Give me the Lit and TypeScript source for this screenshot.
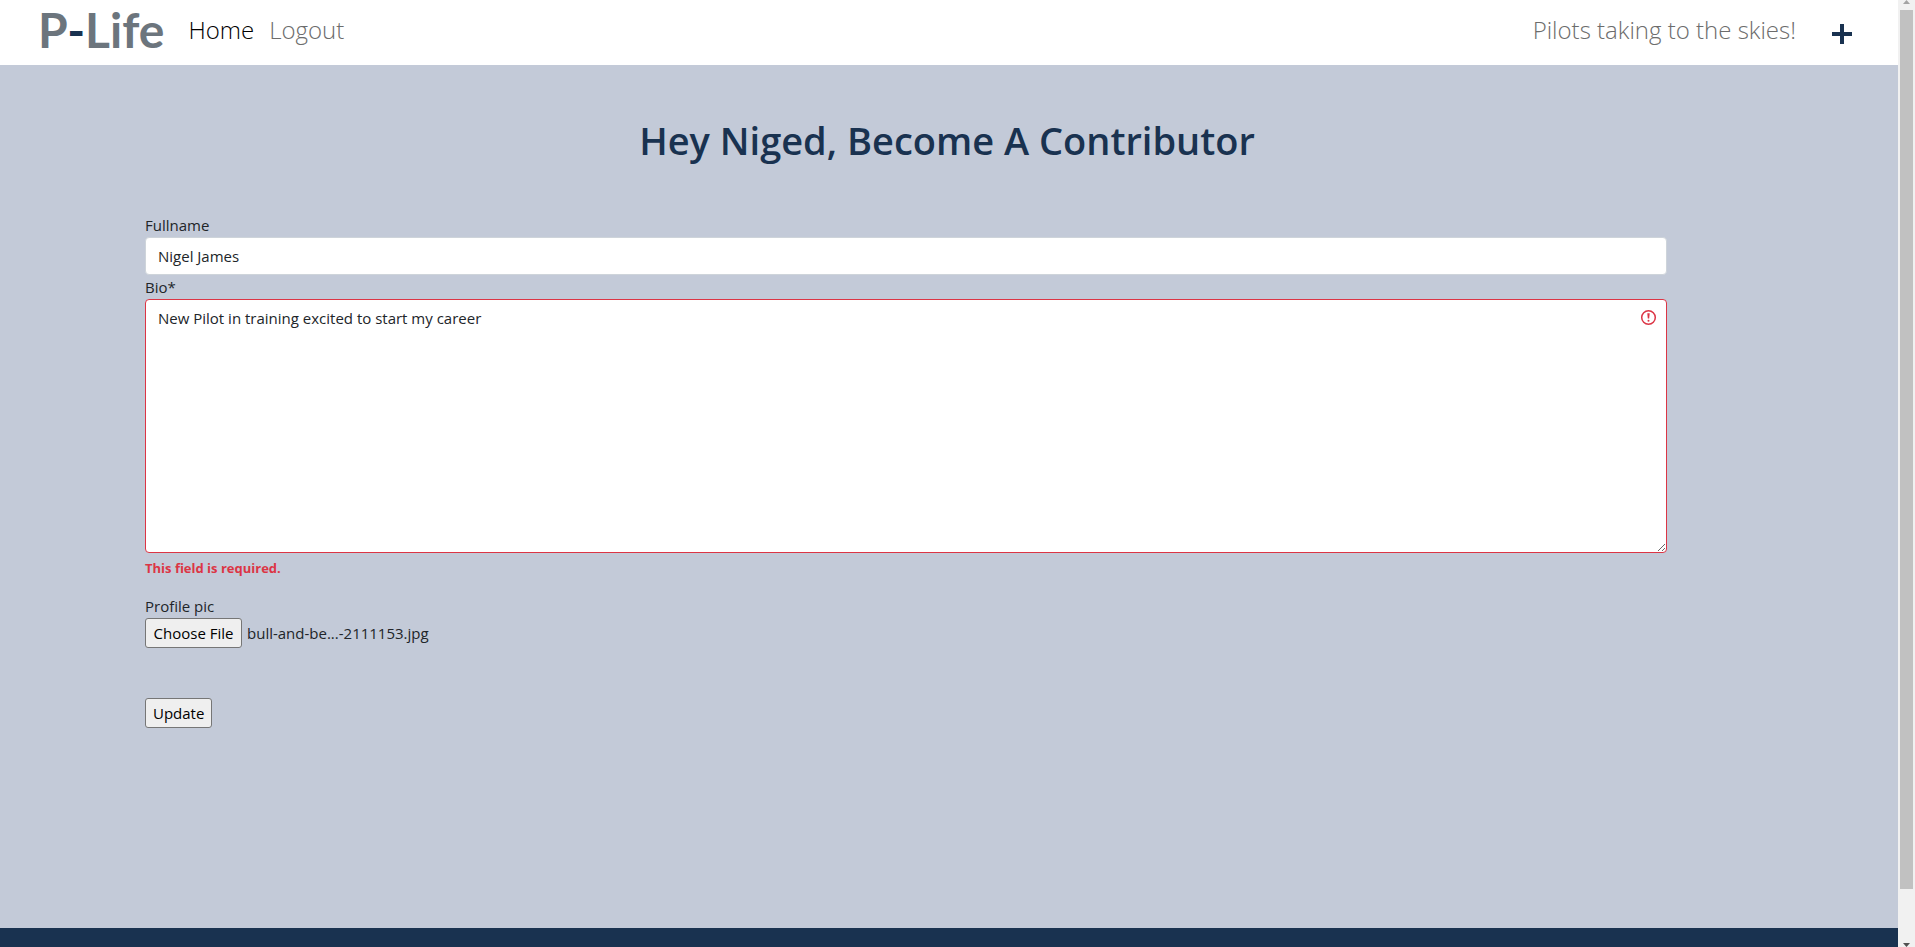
import { LitElement, html, css } from "lit";
import { customElement, state } from "lit/decorators.js";

@customElement("site-nav")
class SiteNav extends LitElement {
  static styles = css`
    :host { display: block; background: #fff; }
    .bar { display: flex; align-items: center; height: 65px; padding: 0 46px 5px 38px; box-sizing: border-box; font: 300 24px/36px "Open Sans", sans-serif; }
    a { text-decoration: none; }
    .brand { font: 700 48px/60px Lato, sans-serif; color: #6c757d; margin-right: 24px; }
    .dash { color: #193250; }
    .links { display: flex; gap: 15px; flex: 1; }
    .links a { color: #6c6c6c; }
    .links a.active { color: #000; }
    .motto { color: #6c6c6c; margin-right: 36px; }
    .add { display: flex; padding-top: 8px; }
  `;
  render() {
    return html`
      <nav class="bar">
        <a class="brand" href="#">P<span class="dash">-</span>Life</a>
        <div class="links">
          <a class="active" href="#">Home</a>
          <a href="#">Logout</a>
        </div>
        <span class="motto">Pilots taking to the skies!</span>
        <a class="add" href="#" aria-label="Add">
          <svg width="20" height="20" viewBox="0 0 20 20"><path d="M8 0h4v8h8v4h-8v8H8v-8H0V8h8z" fill="#193250" /></svg>
        </a>
      </nav>
    `;
  }
}

@customElement("contributor-form")
class ContributorForm extends LitElement {
  static styles = css`
    :host { display: block; color: #212529; font: 400 15px/24px "Open Sans", sans-serif; }
    form { display: flex; flex-direction: column; align-items: flex-start; }
    .control { display: block; width: 100%; box-sizing: border-box; margin: 0; padding: 6px 12px; border: 1px solid #ced4da; border-radius: 4px; background: #fff; color: #212529; font: inherit; outline: none; }
    .box { position: relative; width: 100%; }
    .invalid { border-color: #dc3545; padding-right: 36px; resize: vertical; height: 254px; }
    .alert { position: absolute; top: 10px; right: 10px; }
    .error { margin: 5px 0 15px; color: #dc3545; font-size: 13px; line-height: 21px; font-weight: 700; }
    .file { display: flex; align-items: center; gap: 5px; margin-bottom: 50px; }
    .picker { width: 97px; height: 30px; font: inherit; overflow: hidden; }
    .picker::file-selector-button, .push { box-sizing: border-box; height: 30px; margin: 0; padding: 0 7px; border: 1px solid #767676; border-radius: 3px; background: #efefef; color: #000; font: inherit; line-height: 28px; }
    .picker::file-selector-button { width: 97px; padding: 0; }
  `;
  @state() private fileName = "bull-and-be...-2111153.jpg";

  private pick(e: Event) {
    const file = (e.target as HTMLInputElement).files?.[0];
    if (file) this.fileName = file.name;
  }

  render() {
    return html`
      <form @submit=${(e: Event) => e.preventDefault()}>
        <label for="fullname">Fullname</label>
        <input class="control" id="fullname" type="text" .value=${"Nigel James"} />
        <label for="bio">Bio*</label>
        <div class="box">
          <textarea class="control invalid" id="bio" aria-describedby="bio-error" .value=${"New Pilot in training excited to start my career"}></textarea>
          <svg class="alert" width="17" height="17" viewBox="0 0 17 17" fill="none" stroke="#dc3545">
            <circle cx="8.5" cy="8.5" r="6.8" stroke-width="1.5" />
            <path d="M7.3 4.3h2.4l-.5 5.2H7.8z" fill="#dc3545" stroke="none" />
            <circle cx="8.5" cy="11.8" r="1" fill="#dc3545" stroke="none" />
          </svg>
        </div>
        <span class="error" id="bio-error">This field is required.</span>
        <label for="pic">Profile pic</label>
        <div class="file">
          <input class="picker" id="pic" type="file" @change=${this.pick} />
          <output for="pic">${this.fileName}</output>
        </div>
        <button class="push" type="submit">Update</button>
      </form>
    `;
  }
}

@customElement("scroll-rail")
class ScrollRail extends LitElement {
  static styles = css`
    :host { display: flex; flex-direction: column; align-items: center; justify-content: space-between; background: #f1f1f1; }
    .thumb { width: 13px; flex: 1; background: #c1c1c1; margin: 6px 0 54px; }
    svg { display: block; }
  `;
  render() {
    return html`
      <svg width="7" height="4" viewBox="0 0 7 4"><path d="M0 4L3.5 0 7 4z" fill="#a3a3a3" /></svg>
      <div class="thumb"></div>
      <svg width="7" height="4" viewBox="0 0 7 4"><path d="M0 0L3.5 4 7 0z" fill="#505050" /></svg>
    `;
  }
}

@customElement("app-root")
class AppRoot extends LitElement {
  static styles = css`
    :host { display: grid; grid-template-columns: 1fr 17px; min-height: 100vh; background: #c3cad8; }
    .page { display: flex; flex-direction: column; }
    main { flex: 1; }
    h1 { margin: 51px 0 49px; padding-right: 4px; text-align: center; color: #193250; font: 600 38px/48px "Open Sans", sans-serif; }
    contributor-form { margin: 0 231px 0 145px; }
    footer { height: 19px; background: #193250; }
  `;
  render() {
    return html`
      <div class="page">
        <site-nav></site-nav>
        <main>
          <h1>Hey Niged, Become A Contributor</h1>
          <contributor-form></contributor-form>
        </main>
        <footer></footer>
      </div>
      <scroll-rail></scroll-rail>
    `;
  }
}
